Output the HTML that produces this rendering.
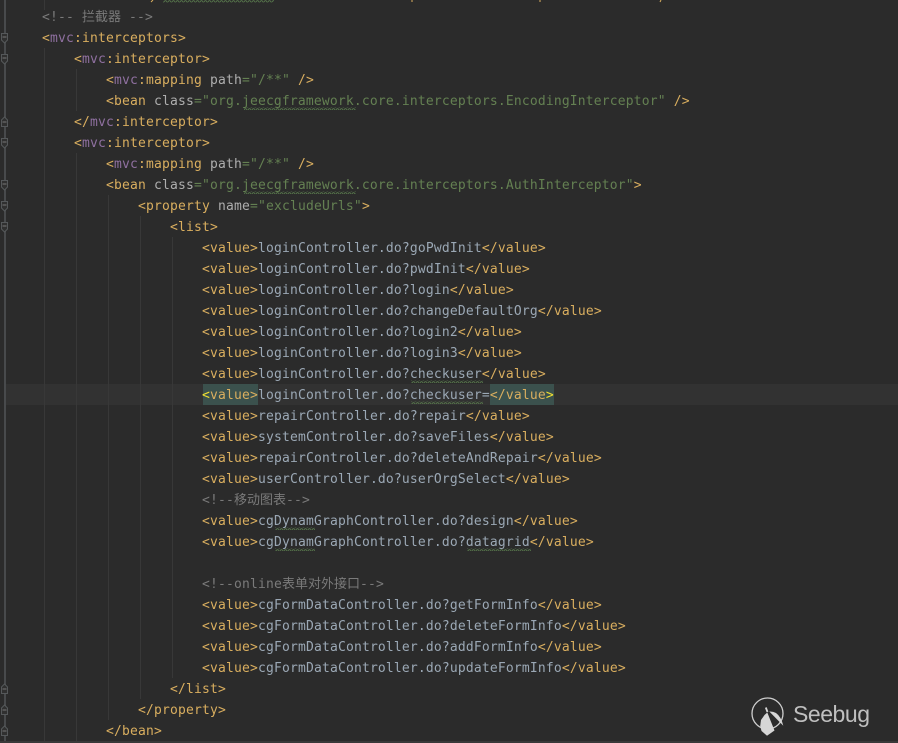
<!DOCTYPE html>
<html><head><meta charset="utf-8"><style>
html,body{margin:0;padding:0;background:#2b2b2b;width:898px;height:743px;overflow:hidden}
#w{position:relative;width:898px;height:743px;overflow:hidden;background:#2b2b2b}
.l{position:absolute;left:0;height:21px;line-height:21px;white-space:pre;font-family:"DejaVu Sans Mono","Liberation Mono",monospace;font-size:13px;letter-spacing:.17px;color:#d9ae5f}
.l i{font-style:normal;color:#8f70a0}.t{color:#9ba8b5}.a{color:#aeaeae}.s{color:#648052}.c{color:#7a7a7a}
.z{font-family:"Noto Sans CJK SC",sans-serif;letter-spacing:0}
.y{color:#f2e030}
.g{position:absolute;width:1px;background:#383838}.h{position:absolute;background:#3b514d;height:21px;top:384px}
</style></head><body><div id="w">
<div style="position:absolute;left:5px;right:0;top:384px;height:21px;background:#323232"></div>
<div class="h" style="left:203px;width:55px"></div><div class="h" style="left:490px;width:64px"></div>
<div style="position:absolute;left:4px;top:0;width:2px;height:741px;background:#484a4c"></div>
<div style="position:absolute;left:0;top:741px;width:898px;height:2px;background:#393939"></div>
<div class="g" style="left:44px;top:0;height:10px"></div><div class="g" style="left:44px;top:48px;height:693px"></div>
<div class="g" style="left:76px;top:69px;height:42px"></div><div class="g" style="left:76px;top:153px;height:588px"></div>
<div class="g" style="left:108px;top:195px;height:525px"></div><div class="g" style="left:140px;top:216px;height:483px"></div><div class="g" style="left:172px;top:237px;height:441px"></div>
<svg width="898" height="743" style="position:absolute;left:0;top:0">
<defs><pattern id="q" width="4" height="3" patternUnits="userSpaceOnUse"><path d="M0 2L1 .7L2 .7L3 2L4 2" fill="none" stroke="#58794c" stroke-width=".8"/></pattern>
<g id="d"><path d="M1.500 -4.500H7.500V2L4.500 5L1.500 2Z" fill="#303030" stroke="#55585a"/><path d="M2.500 -1H6.500" stroke="#777"/></g>
<g id="u"><path d="M1.500 4.500H7.500V-2L4.500 -5L1.500 -2Z" fill="#303030" stroke="#55585a"/><path d="M2.500 0H6.500" stroke="#777"/></g></defs>
<use href="#d" x="0" y="38"/><use href="#d" x="0" y="59"/><use href="#u" x="0" y="122"/><use href="#d" x="0" y="143"/><use href="#d" x="0" y="185"/><use href="#d" x="0" y="206"/><use href="#d" x="0" y="227"/><use href="#u" x="0" y="689"/><use href="#u" x="0" y="710"/><use href="#u" x="0" y="731"/>
<g fill="url(#q)"><rect x="163" y="0" width="111" height="3"/><rect x="244" y="107" width="112" height="3"/><rect x="244" y="191" width="112" height="3"/><rect x="411" y="380" width="72" height="3"/><rect x="411" y="401" width="72" height="3"/><rect x="275" y="527" width="40" height="3"/><rect x="275" y="548" width="40" height="3"/><rect x="467" y="548" width="64" height="3"/></g>
<g stroke="#d9ae5f" stroke-width="1"><path d="M153 0L151 2M412 0V2M540 0V2M661 0L660 2"/></g>
<circle cx="767.500" cy="713.500" r="15.500" fill="none" stroke="#cfcfcf" stroke-width="1.300"/>
<path d="M767.300 712.500L774.500 730.500L767 735.700L761.500 731L760.200 726L761 720L764.500 715Z" fill="#d6d6d6"/>
<path d="M769.300 711.500Q773 711.300 776 713Q781 716.500 783.300 725.700Z" fill="#d6d6d6"/>
<path d="M767.500 712L765.800 707.500" stroke="#d6d6d6" stroke-width="1.800"/>
<text x="793" y="722" font-family="Liberation Sans,sans-serif" font-size="23" fill="#bfbfbf" textLength="77">Seebug</text>
</svg>
<div class="l c" style="top:5px;left:42px">&lt;!-- <span class="z">拦截器</span> --&gt;</div>
<div class="l" style="top:28px;left:42px">&lt;<i>mvc</i>:interceptors&gt;</div>
<div class="l" style="top:49px;left:74px">&lt;<i>mvc</i>:interceptor&gt;</div>
<div class="l" style="top:70px;left:106px">&lt;<i>mvc</i>:mapping <span class="a">path</span><span class="s">="/**"</span> /&gt;</div>
<div class="l" style="top:91px;left:106px">&lt;bean <span class="a">class</span><span class="s">="org.jeecgframework.core.interceptors.EncodingInterceptor"</span> /&gt;</div>
<div class="l" style="top:112px;left:74px">&lt;/<i>mvc</i>:interceptor&gt;</div>
<div class="l" style="top:133px;left:74px">&lt;<i>mvc</i>:interceptor&gt;</div>
<div class="l" style="top:154px;left:106px">&lt;<i>mvc</i>:mapping <span class="a">path</span><span class="s">="/**"</span> /&gt;</div>
<div class="l" style="top:175px;left:106px">&lt;bean <span class="a">class</span><span class="s">="org.jeecgframework.core.interceptors.AuthInterceptor"</span>&gt;</div>
<div class="l" style="top:196px;left:138px">&lt;property <span class="a">name</span><span class="s">="excludeUrls"</span>&gt;</div>
<div class="l" style="top:217px;left:170px">&lt;list&gt;</div>
<div class="l" style="top:238px;left:202px">&lt;value&gt;<span class="t">loginController.do?goPwdInit</span>&lt;/value&gt;</div>
<div class="l" style="top:259px;left:202px">&lt;value&gt;<span class="t">loginController.do?pwdInit</span>&lt;/value&gt;</div>
<div class="l" style="top:280px;left:202px">&lt;value&gt;<span class="t">loginController.do?login</span>&lt;/value&gt;</div>
<div class="l" style="top:301px;left:202px">&lt;value&gt;<span class="t">loginController.do?changeDefaultOrg</span>&lt;/value&gt;</div>
<div class="l" style="top:322px;left:202px">&lt;value&gt;<span class="t">loginController.do?login2</span>&lt;/value&gt;</div>
<div class="l" style="top:343px;left:202px">&lt;value&gt;<span class="t">loginController.do?login3</span>&lt;/value&gt;</div>
<div class="l" style="top:364px;left:202px">&lt;value&gt;<span class="t">loginController.do?checkuser</span>&lt;/value&gt;</div>
<div class="l" style="top:385px;left:202px"><span class="y">&lt;</span>value&gt;<span class="t">loginController.do?checkuser=</span>&lt;/value<span class="y">&gt;</span></div>
<div class="l" style="top:406px;left:202px">&lt;value&gt;<span class="t">repairController.do?repair</span>&lt;/value&gt;</div>
<div class="l" style="top:427px;left:202px">&lt;value&gt;<span class="t">systemController.do?saveFiles</span>&lt;/value&gt;</div>
<div class="l" style="top:448px;left:202px">&lt;value&gt;<span class="t">repairController.do?deleteAndRepair</span>&lt;/value&gt;</div>
<div class="l" style="top:469px;left:202px">&lt;value&gt;<span class="t">userController.do?userOrgSelect</span>&lt;/value&gt;</div>
<div class="l c" style="top:488px;left:202px">&lt;!--<span class="z">移动图表</span>--&gt;</div>
<div class="l" style="top:511px;left:202px">&lt;value&gt;<span class="t">cgDynamGraphController.do?design</span>&lt;/value&gt;</div>
<div class="l" style="top:532px;left:202px">&lt;value&gt;<span class="t">cgDynamGraphController.do?datagrid</span>&lt;/value&gt;</div>
<div class="l c" style="top:572px;left:202px">&lt;!--online<span class="z">表单对外接口</span>--&gt;</div>
<div class="l" style="top:595px;left:202px">&lt;value&gt;<span class="t">cgFormDataController.do?getFormInfo</span>&lt;/value&gt;</div>
<div class="l" style="top:616px;left:202px">&lt;value&gt;<span class="t">cgFormDataController.do?deleteFormInfo</span>&lt;/value&gt;</div>
<div class="l" style="top:637px;left:202px">&lt;value&gt;<span class="t">cgFormDataController.do?addFormInfo</span>&lt;/value&gt;</div>
<div class="l" style="top:658px;left:202px">&lt;value&gt;<span class="t">cgFormDataController.do?updateFormInfo</span>&lt;/value&gt;</div>
<div class="l" style="top:679px;left:170px">&lt;/list&gt;</div>
<div class="l" style="top:700px;left:138px">&lt;/property&gt;</div>
<div class="l" style="top:721px;left:106px">&lt;/bean&gt;</div>
</div></body></html>
